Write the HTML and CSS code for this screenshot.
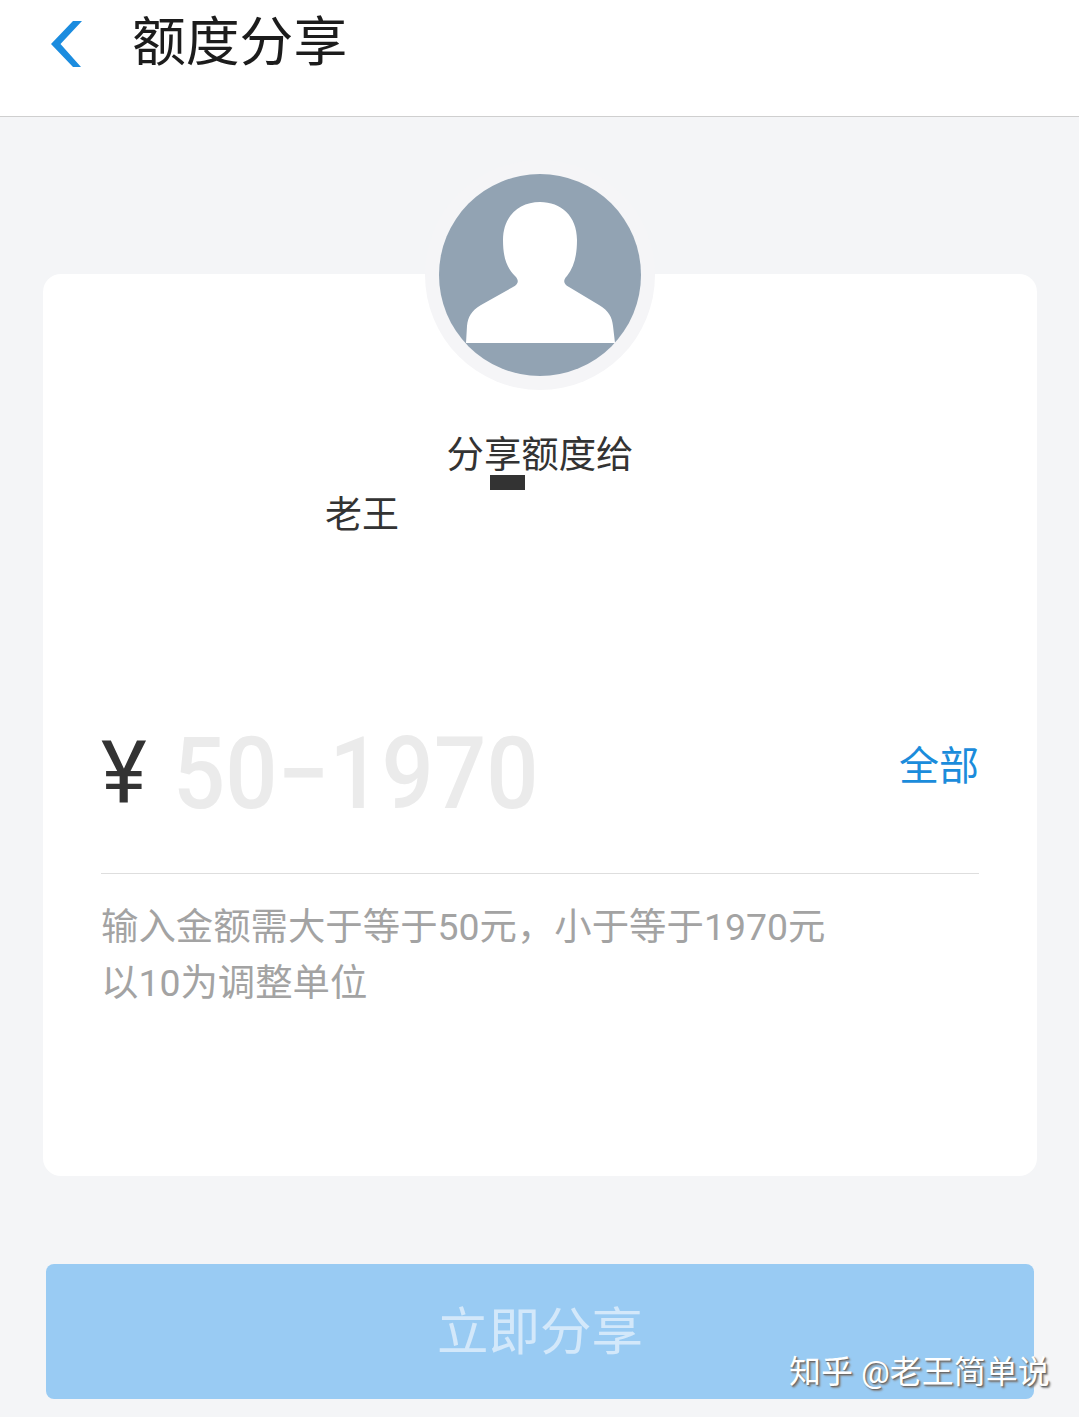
FILE: index.html
```html
<!DOCTYPE html>
<html lang="zh-CN">
<head>
<meta charset="utf-8">
<title>额度分享</title>
<link rel="stylesheet" href="styles.css">
</head>
<body>
<header class="topbar">
  <svg class="back" viewBox="0 0 31 46" width="31" height="46" aria-label="返回"><polygon points="22,0 31,0 9.500,23 30,46 22,46 0,23" fill="#1b8cdf"/></svg>
  <h1 class="title">额度分享</h1>
</header>
<main class="page">
  <section class="card">
    <div class="avatar-ring">
      <svg class="avatar" viewBox="0 0 202 202" width="202" height="202">
        <circle cx="101" cy="101" r="101" fill="#92a3b3"/>
        <path d="M101 28C80 28 64 42 64 66C64 82 67 93 76 102C80 106 80 110 74 113L42 131C32 137 29 143 28 152L27 169L176 169L174 152C173 143 170 137 160 131L130 113C124 110 124 106 128 102C135 93 138 82 138 66C138 42 122 28 101 28Z" fill="#fff"/>
      </svg>
    </div>
    <p class="share-to">分享额度给</p>
    <span class="redact"></span>
    <p class="recipient">老王</p>
    <div class="amount-row">
      <span class="yen">¥</span>
      <span class="placeholder">50−1970</span>
      <a class="all">全部</a>
    </div>
    <p class="hint">输入金额需大于等于50元，小于等于1970元<br>以10为调整单位</p>
  </section>
  <button class="submit">立即分享</button>
</main>
<div class="watermark">知乎 @老王简单说</div>
</body>
</html>
```
FILE: styles.css
```css
* { box-sizing: border-box; }
html, body { margin: 0; padding: 0; }
body {
  width: 1079px;
  height: 1417px;
  overflow: hidden;
  position: relative;
  background: #f4f5f7;
  font-family: Roboto, "Noto Sans CJK SC", sans-serif;
}
.topbar {
  height: 117px;
  background: #fff;
  border-bottom: 1px solid #cfcfcf;
  display: flex;
  align-items: flex-start;
  padding-left: 51px;
}
.back { margin-top: 21px; flex: none; }
.title {
  margin: 1px 0 0 50px;
  font-size: 53.800px;
  font-weight: 400;
  line-height: 84px;
  color: #1c1c1c;
}
.page { padding: 157px 42px 0 43px; }
.card {
  position: relative;
  height: 902px;
  background: #fff;
  border-radius: 18px;
  padding-top: 154px;
}
.avatar-ring {
  position: absolute;
  left: 382px;
  top: -114px;
  width: 230px;
  height: 230px;
  border-radius: 50%;
  background: #f5f5f7;
  display: flex;
  align-items: center;
  justify-content: center;
}
.avatar { display: block; }
.share-to {
  margin: 0;
  text-align: center;
  font-size: 37.400px;
  line-height: 54px;
  color: #333;
}
.redact {
  position: absolute;
  left: 447px;
  top: 201px;
  width: 35px;
  height: 15px;
  background: #333;
}
.recipient {
  margin: 7px 0 0;
  padding-left: 282px;
  font-size: 37px;
  line-height: 54px;
  color: #333;
}
.amount-row {
  margin: 156px 58px 0;
  height: 175px;
  border-bottom: 1px solid #dedede;
  display: flex;
  align-items: flex-start;
}
.yen {
  font-size: 87px;
  font-weight: 400;
  line-height: 100px;
  margin-top: 24px;
  color: #333;
  width: 72px;
  flex: none;
}
.placeholder {
  display: inline-block;
  font-size: 100px;
  font-weight: 500;
  line-height: 100px;
  margin-top: 25px;
  color: #ebebeb;
  transform: scaleX(0.92);
  transform-origin: left center;
}
.all {
  margin-left: auto;
  margin-top: 41px;
  font-size: 40px;
  line-height: 54px;
  color: #1b8cdb;
}
.hint {
  margin: 25px 58px 0;
  font-size: 37.400px;
  line-height: 56px;
  color: #a3a3a3;
}
.submit {
  display: block;
  width: 988px;
  height: 135px;
  margin: 88px 0 0 3px;
  border: 0;
  border-radius: 8px;
  background: #99cbf3;
  color: #d3e8fa;
  font-family: inherit;
  font-size: 51.500px;
  padding: 0 0 8px;
}
.watermark {
  position: absolute;
  left: 789px;
  top: 1349px;
  font-size: 32px;
  line-height: 46px;
  color: #fff;
  white-space: nowrap;
  text-shadow: 1px 1px 1px #666, 2px 2px 2px #888;
}
```
